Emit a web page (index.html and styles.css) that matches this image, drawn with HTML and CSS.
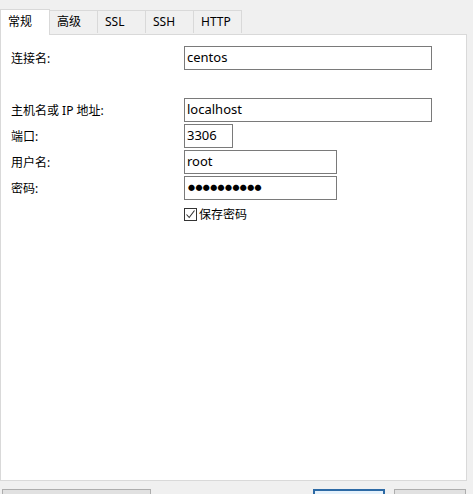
FILE: index.html
```html
<!DOCTYPE html>
<html>
<head>
	<meta charset="utf-8">
	<title>连接属性</title>
<link rel="stylesheet" href="styles.css">
</head>
<body>
	<div class="dialog">
		<div class="tabs">
			<div class="tab active">常规</div>
			<div class="tab">高级</div>
			<div class="tab">SSL</div>
			<div class="tab">SSH</div>
			<div class="tab">HTTP</div>
		</div>

		<div class="panel">
			<div class="form">
				<label>连接名:</label>
				<div class="field wide">centos</div>

				<div class="spacer"></div>

				<label>主机名或 IP 地址:</label>
				<div class="field wide">localhost</div>

				<label>端口:</label>
				<div class="field port">3306</div>

				<label>用户名:</label>
				<div class="field mid">root</div>

				<label>密码:</label>
				<div class="field mid dots">●●●●●●●●●●</div>

				<div></div>
				<div class="check">
					<span class="box">
						<svg width="11" height="11" viewBox="0 0 11 11"><path d="M1.5 5.5 L4.2 8.5 L9.5 1.5" fill="none" stroke="#333" stroke-width="1.1"/></svg>
					</span>
					保存密码
				</div>
			</div>
		</div>

		<div class="buttons">
			<div class="btn left"></div>
			<div class="btn primary"></div>
			<div class="btn"></div>
		</div>
	</div>
</body>
</html>
```

FILE: styles.css
```css
* {
	margin: 0;
	padding: 0;
	box-sizing: border-box;
}

body {
	background-color: #f0f0f0;
	font-family: "Noto Sans", "Noto Sans CJK SC", sans-serif;
	font-size: 12px;
	color: #000;
	overflow: hidden;
}

.dialog {
	width: 467px;
	height: 494px;
}

.tabs {
	display: flex;
	height: 34px;
	padding-top: 8px;
	align-items: flex-end;
}

.tab {
	width: 48px;
	height: 23px;
	margin-bottom: 1px;
	border: 1px solid #d9d9d9;
	border-bottom: none;
	border-left: none;
	background: #f0f0f0;
	padding: 2px 0 0 7px;
	line-height: 18px;
}

.tab.active {
	width: 50px;
	height: 26px;
	margin-bottom: -1px;
	border-left: 1px solid #d9d9d9;
	background: #fff;
	position: relative;
	z-index: 1;
	padding: 3px 0 0 7px;
}

.panel {
	background: #fff;
	border: 1px solid #d9d9d9;
	height: 447px;
	padding: 11px 0 0 10px;
}

.form {
	display: grid;
	grid-template-columns: 173px 248px;
	grid-auto-rows: 24px;
	row-gap: 2px;
	align-items: center;
}

.spacer {
	grid-column: 1 / 3;
}

label {
	padding-top: 0;
}

.field {
	height: 24px;
	border: 1px solid #7a7a7a;
	padding: 0 2px;
	font-size: 13px;
	line-height: 21px;
	background: #fff;
}

.wide {
	width: 248px;
}

.port {
	width: 49px;
}

.mid {
	width: 153px;
}

.dots {
	font-size: 7px;
	letter-spacing: 0.4px;
	line-height: 22px;
	padding-left: 3px;
}

.check {
	display: flex;
	align-items: center;
	gap: 2px;
	height: 24px;
}

.box {
	width: 13px;
	height: 13px;
	border: 1px solid #333;
	display: flex;
	align-items: center;
	justify-content: center;
}

.buttons {
	display: flex;
	padding: 8px 0 0 2px;
}

.btn {
	width: 72px;
	height: 24px;
	border: 1px solid #adadad;
	background: #e1e1e1;
	margin-left: 9px;
}

.btn.left {
	width: 149px;
	margin-left: 0;
	margin-right: 153px;
}

.btn.primary {
	border: 2px solid #2d6aa5;
	background: #e5f1fb;
	margin-left: 9px;
}
```
